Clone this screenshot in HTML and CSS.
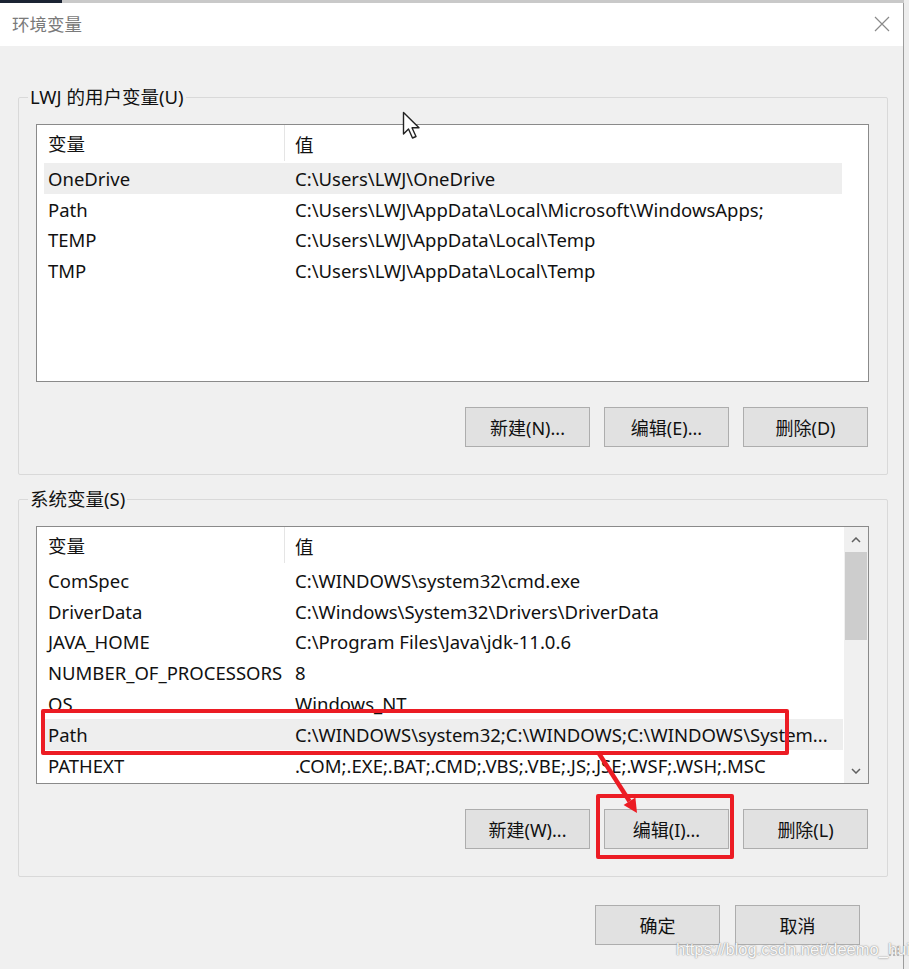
FILE: index.html
```html
<!DOCTYPE html>
<html lang="zh-CN">
<head>
    <meta charset="UTF-8">
    <meta name="viewport" content="width=device-width, initial-scale=1.0">
    <title>环境变量</title>
    <link rel="stylesheet" href="styles.css">
</head>
<body>
    <div class="screen-edge"><span class="edge-dark"></span></div>
    <div class="window">
        <div class="titlebar">
            <span class="title">环境变量</span>
            <svg class="close" width="16" height="16" viewBox="0 0 16 16">
                <path d="M1 1 L15 15 M15 1 L1 15" stroke="#8a8a8a" stroke-width="1.2" fill="none"/>
            </svg>
        </div>
        <div class="client">
            <fieldset class="group">
                <legend>LWJ 的用户变量(U)</legend>
                <div class="list">
                    <div class="rows">
                        <div class="row head"><span class="name">变量</span><span class="value">值</span></div>
                        <div class="row selected"><span class="name">OneDrive</span><span class="value">C:\Users\LWJ\OneDrive</span></div>
                        <div class="row"><span class="name">Path</span><span class="value">C:\Users\LWJ\AppData\Local\Microsoft\WindowsApps;</span></div>
                        <div class="row"><span class="name">TEMP</span><span class="value">C:\Users\LWJ\AppData\Local\Temp</span></div>
                        <div class="row"><span class="name">TMP</span><span class="value">C:\Users\LWJ\AppData\Local\Temp</span></div>
                    </div>
                </div>
                <div class="buttons">
                    <button class="btn">新建(N)...</button>
                    <button class="btn">编辑(E)...</button>
                    <button class="btn">删除(D)</button>
                </div>
            </fieldset>

            <fieldset class="group">
                <legend>系统变量(S)</legend>
                <div class="list scrolled">
                    <div class="rows">
                        <div class="row head"><span class="name">变量</span><span class="value">值</span></div>
                        <div class="row"><span class="name">ComSpec</span><span class="value">C:\WINDOWS\system32\cmd.exe</span></div>
                        <div class="row"><span class="name">DriverData</span><span class="value">C:\Windows\System32\Drivers\DriverData</span></div>
                        <div class="row"><span class="name">JAVA_HOME</span><span class="value">C:\Program Files\Java\jdk-11.0.6</span></div>
                        <div class="row"><span class="name">NUMBER_OF_PROCESSORS</span><span class="value">8</span></div>
                        <div class="row"><span class="name">OS</span><span class="value">Windows_NT</span></div>
                        <div class="row selected"><span class="name">Path</span><span class="value">C:\WINDOWS\system32;C:\WINDOWS;C:\WINDOWS\System...</span></div>
                        <div class="row"><span class="name">PATHEXT</span><span class="value">.COM;.EXE;.BAT;.CMD;.VBS;.VBE;.JS;.JSE;.WSF;.WSH;.MSC</span></div>
                    </div>
                    <div class="scrollbar">
                        <svg class="arrow" width="10" height="6" viewBox="0 0 10 6"><path d="M1 5 L5 1 L9 5" stroke="#606060" stroke-width="1.5" fill="none"/></svg>
                        <div class="track"><div class="thumb"></div></div>
                        <svg class="arrow" width="10" height="6" viewBox="0 0 10 6"><path d="M1 1 L5 5 L9 1" stroke="#606060" stroke-width="1.5" fill="none"/></svg>
                    </div>
                </div>
                <div class="buttons">
                    <button class="btn">新建(W)...</button>
                    <button class="btn">编辑(I)...</button>
                    <button class="btn">删除(L)</button>
                </div>
            </fieldset>

            <div class="buttons dialog-buttons">
                <button class="btn">确定</button>
                <button class="btn">取消</button>
            </div>
        </div>
    </div>

    <!-- mouse pointer -->
    <svg class="pointer" width="20" height="30" viewBox="0 0 20 30">
        <path d="M1.5 1.5 L1.5 23 L6.5 18 L10.5 27 L14 25.5 L10 16.8 L17 16.8 Z" fill="#fff" stroke="#222" stroke-width="1.4" stroke-linejoin="round"/>
    </svg>

    <!-- red markup -->
    <div class="mark mark-row"></div>
    <div class="mark mark-btn"></div>
    <svg class="mark-arrow" width="60" height="80" viewBox="0 0 60 80">
        <path d="M8 4 L39.5 53.2" stroke="#ec1c24" stroke-width="4.5" fill="none"/>
        <path d="M47 65 L33.6 56.9 L45.4 49.5 Z" fill="#ec1c24"/>
    </svg>

    <div class="watermark">https://blog.csdn.net/deemo_hui</div>
    <svg class="grip" width="12" height="12" viewBox="0 0 12 12">
        <g fill="#b8b8b8">
            <rect x="8" y="0" width="2" height="2"/>
            <rect x="4" y="4" width="2" height="2"/><rect x="8" y="4" width="2" height="2"/>
            <rect x="0" y="8" width="2" height="2"/><rect x="4" y="8" width="2" height="2"/><rect x="8" y="8" width="2" height="2"/>
        </g>
    </svg>
</body>
</html>
```

FILE: styles.css
```css
body {
    margin: 0;
    width: 909px;
    height: 969px;
    overflow: hidden;
    background-color: #ededed;
    font-family: "Noto Sans", "Noto Sans CJK SC", sans-serif;
    font-size: 18.5px;
    color: #111;
    position: relative;
}
.screen-edge {
    height: 3px;
    background-color: #c9c9c9;
    width: 904px;
}
.edge-dark {
    display: block;
    width: 62px;
    height: 3px;
    background-color: #1b2333;
}
.window {
    width: 903px;
    height: 966px;
    border-right: 1px solid #9c9c9c;
    display: flex;
    flex-direction: column;
}
.titlebar {
    height: 43px;
    background-color: #fff;
    display: flex;
    align-items: center;
    justify-content: space-between;
    padding: 0 13px 0 12px;
}
.title {
    color: #7a7a7a;
    font-family: "Noto Sans CJK SC", sans-serif;
    font-size: 17.5px;
    margin-top: -2px;
}
.close {
    margin-top: -2px;
}
.client {
    flex: 1;
    background-color: #f0f0f0;
    padding: 40px 15px 0 18px;
}
.group {
    margin: 0 0 13px 0;
    padding: 16px 18px 27px 17px;
    border: 1px solid #d9d9d9;
    border-radius: 2px;
    min-width: 0;
}
.group legend {
    margin-left: -8px;
    padding: 0 2px;
    line-height: 22px;
}
.list {
    height: 256px;
    background-color: #fff;
    border: 1px solid #8a8a8a;
    display: flex;
}
.rows {
    flex: 1;
    padding-right: 1px;
    min-width: 0;
}
.row {
    display: grid;
    grid-template-columns: 241px 1fr;
    height: 30.8px;
    align-items: center;
    margin: 0 25px 0 7px;
    white-space: nowrap;
}
.scrolled .row {
    margin-right: 0;
}
.row.head {
    height: 38px;
}
.row.head .name {
    align-self: stretch;
    display: flex;
    align-items: center;
    border-right: 1px solid #e5e5e5;
    margin-bottom: 2px;
}
.row.selected {
    background-color: #eeeeee;
}
.name {
    padding-left: 4px;
}
.value {
    padding-left: 10px;
    overflow: hidden;
}
.scrollbar {
    width: 24px;
    background-color: #f0f0f0;
    display: flex;
    flex-direction: column;
    align-items: center;
}
.scrollbar .arrow {
    margin: 10px 0 9px;
}
.track {
    flex: 1;
    align-self: stretch;
    padding: 0 1px;
}
.thumb {
    height: 88px;
    background-color: #cdcdcd;
}
.buttons {
    display: flex;
    justify-content: flex-end;
    gap: 14px;
    margin-top: 25px;
    margin-right: 1px;
}
.btn {
    width: 125px;
    height: 40px;
    background-color: #e1e1e1;
    border: 1px solid #adadad;
    font-family: "Noto Sans", "Noto Sans CJK SC", sans-serif;
    font-size: 18px;
    color: #111;
    padding: 0;
}
.dialog-buttons {
    margin-top: 28px;
    margin-right: 28px;
    gap: 15px;
}
.pointer {
    position: absolute;
    left: 402px;
    top: 111px;
}
.mark {
    position: absolute;
    border: 4px solid #ec1c24;
    border-radius: 2px;
}
.mark-row {
    left: 41px;
    top: 709px;
    width: 740px;
    height: 38px;
}
.mark-btn {
    left: 596px;
    top: 794px;
    width: 130px;
    height: 57px;
}
.mark-arrow {
    position: absolute;
    left: 590px;
    top: 748px;
}
.watermark {
    position: absolute;
    left: 676px;
    top: 940px;
    font-family: "Liberation Sans", sans-serif;
    font-size: 16.5px;
    color: rgba(255, 255, 255, 0.95);
    text-shadow: 0 0 1px #8c8c8c, 0 0 2px #a0a0a0;
}
.grip {
    position: absolute;
    left: 889px;
    top: 946px;
}
```
